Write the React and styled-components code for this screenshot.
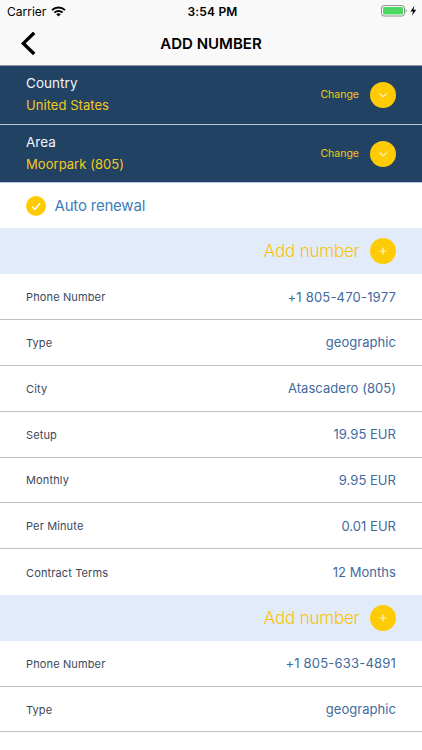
import React, { useState } from 'react'
import styled, { createGlobalStyle } from 'styled-components'

const GlobalStyle = createGlobalStyle`
    * {
        box-sizing: border-box;
    }
    body {
        margin: 0;
        overflow: hidden;
        background: #ffffff;
        font-family: Inter, 'Liberation Sans', sans-serif;
    }
    button {
        padding: 0;
        border: none;
        background: none;
        font: inherit;
        color: inherit;
    }
`;

const numbers = [
    {
        phone: '+1 805-470-1977',
        type: 'geographic',
        city: 'Atascadero (805)',
        setup: '19.95 EUR',
        monthly: '9.95 EUR',
        perMinute: '0.01 EUR',
        terms: '12 Months',
    },
    {
        phone: '+1 805-633-4891',
        type: 'geographic',
    },
]

const fields = [
    { key: 'phone', label: 'Phone Number' },
    { key: 'type', label: 'Type' },
    { key: 'city', label: 'City' },
    { key: 'setup', label: 'Setup' },
    { key: 'monthly', label: 'Monthly' },
    { key: 'perMinute', label: 'Per Minute' },
    { key: 'terms', label: 'Contract Terms' },
]

function StatusBar() {
    return (
        <StatusBarStyle>
            <div className="carrier">
                <span>Carrier</span>
                <svg width="15" height="11" viewBox="0 0 15 11">
                    <g fill="none" stroke="#000" strokeWidth="1.9">
                        <path d="M1 4.2a9.2 9.2 0 0 1 13 0" />
                        <path d="M3.4 6.7a5.8 5.8 0 0 1 8.2 0" />
                    </g>
                    <path d="M5.2 8.3a3.3 3.3 0 0 1 4.6 0L7.5 10.6z" />
                </svg>
            </div>
            <time>3:54 PM</time>
            <div className="power">
                <svg width="36" height="12" viewBox="0 0 36 12">
                    <rect x="0.5" y="0.6" width="23" height="10.4" rx="2.4" fill="#fff" stroke="#8e8e8e" />
                    <rect x="2" y="2.1" width="20" height="7.4" rx="0.8" fill="#4cd964" />
                    <path d="M24.7 4c1.4 .4 1.4 3.2 0 3.6z" fill="#8e8e8e" />
                    <path d="M33.4 .8 29.4 6.4h2.6l-1 4.4 4.2-6h-2.7z" />
                </svg>
            </div>
        </StatusBarStyle>
    )
}

function Selector({ label, value }) {
    return (
        <SelectorStyle>
            <div className="choice">
                <span>{label}</span>
                <strong>{value}</strong>
            </div>
            <button className="change">
                Change
                <Circle $size={26}>
                    <svg width="26" height="26" viewBox="0 0 26 26">
                        <path d="M9.5 11.6 13.1 14.8 16.7 11.6" />
                    </svg>
                </Circle>
            </button>
        </SelectorStyle>
    )
}

function NumberOffer({ number }) {
    return (
        <section>
            <AddButton>
                Add number
                <Circle $size={26}>
                    <svg width="26" height="26" viewBox="0 0 26 26">
                        <path d="M9.4 13h7.2M13 9.4v7.2" />
                    </svg>
                </Circle>
            </AddButton>
            {fields.filter(({ key }) => number[key]).map(({ key, label }) => (
                <DetailRow key={key} $last={key === 'terms'} $spacing={key === 'phone' ? 0.2 : 0.04}>
                    <span>{label}</span>
                    <strong>{number[key]}</strong>
                </DetailRow>
            ))}
        </section>
    )
}

function App() {
    const [renewal, setRenewal] = useState(true)

    return (
        <Screen>
            <GlobalStyle />
            <StatusBar />
            <NavBar>
                <button aria-label="Back">
                    <svg width="16" height="24" viewBox="0 0 16 24">
                        <path d="M14.2 .8 3.4 11.4 14.2 22" />
                    </svg>
                </button>
                <h1>ADD NUMBER</h1>
            </NavBar>
            <Selector label="Country" value="United States" />
            <Selector label="Area" value="Moorpark (805)" />
            <Renewal onClick={() => setRenewal(!renewal)}>
                <Circle $size={20}>
                    {renewal && (
                        <svg width="20" height="20" viewBox="0 0 20 20">
                            <path d="M6.1 10.8 8.8 13.4 14 7.2" />
                        </svg>
                    )}
                </Circle>
                Auto renewal
            </Renewal>
            {numbers.map((number) => (
                <NumberOffer key={number.phone} number={number} />
            ))}
        </Screen>
    )
}

const Screen = styled.main`
    display: flex;
    flex-direction: column;
    width: 422px;
    height: 750px;
    overflow: hidden;
    > * {
        flex-shrink: 0;
    }
`;

const StatusBarStyle = styled.header`
    display: grid;
    grid-template-columns: 1fr auto 1fr;
    align-items: center;
    height: 22px;
    padding: 0 5px 0 7px;
    background: #f9f9f9;
    font-size: 12px;
    svg {
        display: block;
    }
    .carrier {
        display: flex;
        align-items: center;
        gap: 5px;
    }
    time {
        padding-left: 1px;
        font-weight: 600;
        letter-spacing: 0.2px;
    }
    .power {
        display: flex;
        justify-content: flex-end;
    }
`;

const NavBar = styled.nav`
    display: grid;
    grid-template-columns: 60px 1fr 60px;
    align-items: center;
    height: 44px;
    border-bottom: 1px solid #8c96a8;
    background: #f9f9f9;
    button {
        display: flex;
        padding-left: 20px;
    }
    path {
        fill: none;
        stroke: #000;
        stroke-width: 3.4;
    }
    h1 {
        margin: 0;
        font-size: 15px;
        font-weight: 600;
        text-align: center;
    }
`;

const Circle = styled.span`
    display: flex;
    width: ${({ $size }) => $size}px;
    height: ${({ $size }) => $size}px;
    border-radius: 50%;
    background: #ffcb05;
    path {
        fill: none;
        stroke: #fff5cc;
        stroke-width: 1.2;
    }
`;

const SelectorStyle = styled.div`
    display: flex;
    align-items: center;
    justify-content: space-between;
    height: 58.7px;
    padding: 0 26px;
    border-bottom: 1px solid #b4c6dc;
    background: #224263;
    .choice {
        display: flex;
        flex-direction: column;
        gap: 4px;
        padding-bottom: 2px;
        font-size: 13px;
        line-height: 18px;
        letter-spacing: 0.05px;
        color: #f0f4fa;
    }
    span {
        font-size: 13.5px;
    }
    strong {
        font-weight: 400;
        color: #f2ca1c;
    }
    .change {
        display: flex;
        align-items: center;
        gap: 11px;
        font-size: 10.5px;
        letter-spacing: 0;
        color: #f2ca1c;
    }
`;

const Renewal = styled.button`
    display: flex;
    align-items: center;
    gap: 8.5px;
    height: 45px;
    padding: 0 26px;
    font-size: 15px;
    letter-spacing: -0.2px;
    color: #3d7eb8;
    path {
        stroke: #fff;
        stroke-width: 1.5;
    }
`;

const AddButton = styled.button`
    display: flex;
    align-items: center;
    justify-content: flex-end;
    gap: 10.5px;
    width: 100%;
    height: 45.83px;
    padding: 0 26px;
    background: #e2ebf9;
    font-size: 17px;
    font-weight: 300;
    letter-spacing: -0.2px;
    color: #f9c400;
`;

const DetailRow = styled.div`
    display: flex;
    align-items: center;
    justify-content: space-between;
    height: 45.83px;
    padding: 0 26px;
    border-bottom: ${({ $last }) => ($last ? 'none' : '1px solid #c2c2c2')};
    font-size: 11px;
    letter-spacing: 0.13px;
    color: #3a485a;
    span {
        padding-top: 1px;
    }
    strong {
        font-size: 13px;
        font-weight: 400;
        letter-spacing: ${({ $spacing }) => $spacing}px;
        color: #3f6a9e;
    }
`;

export default App
